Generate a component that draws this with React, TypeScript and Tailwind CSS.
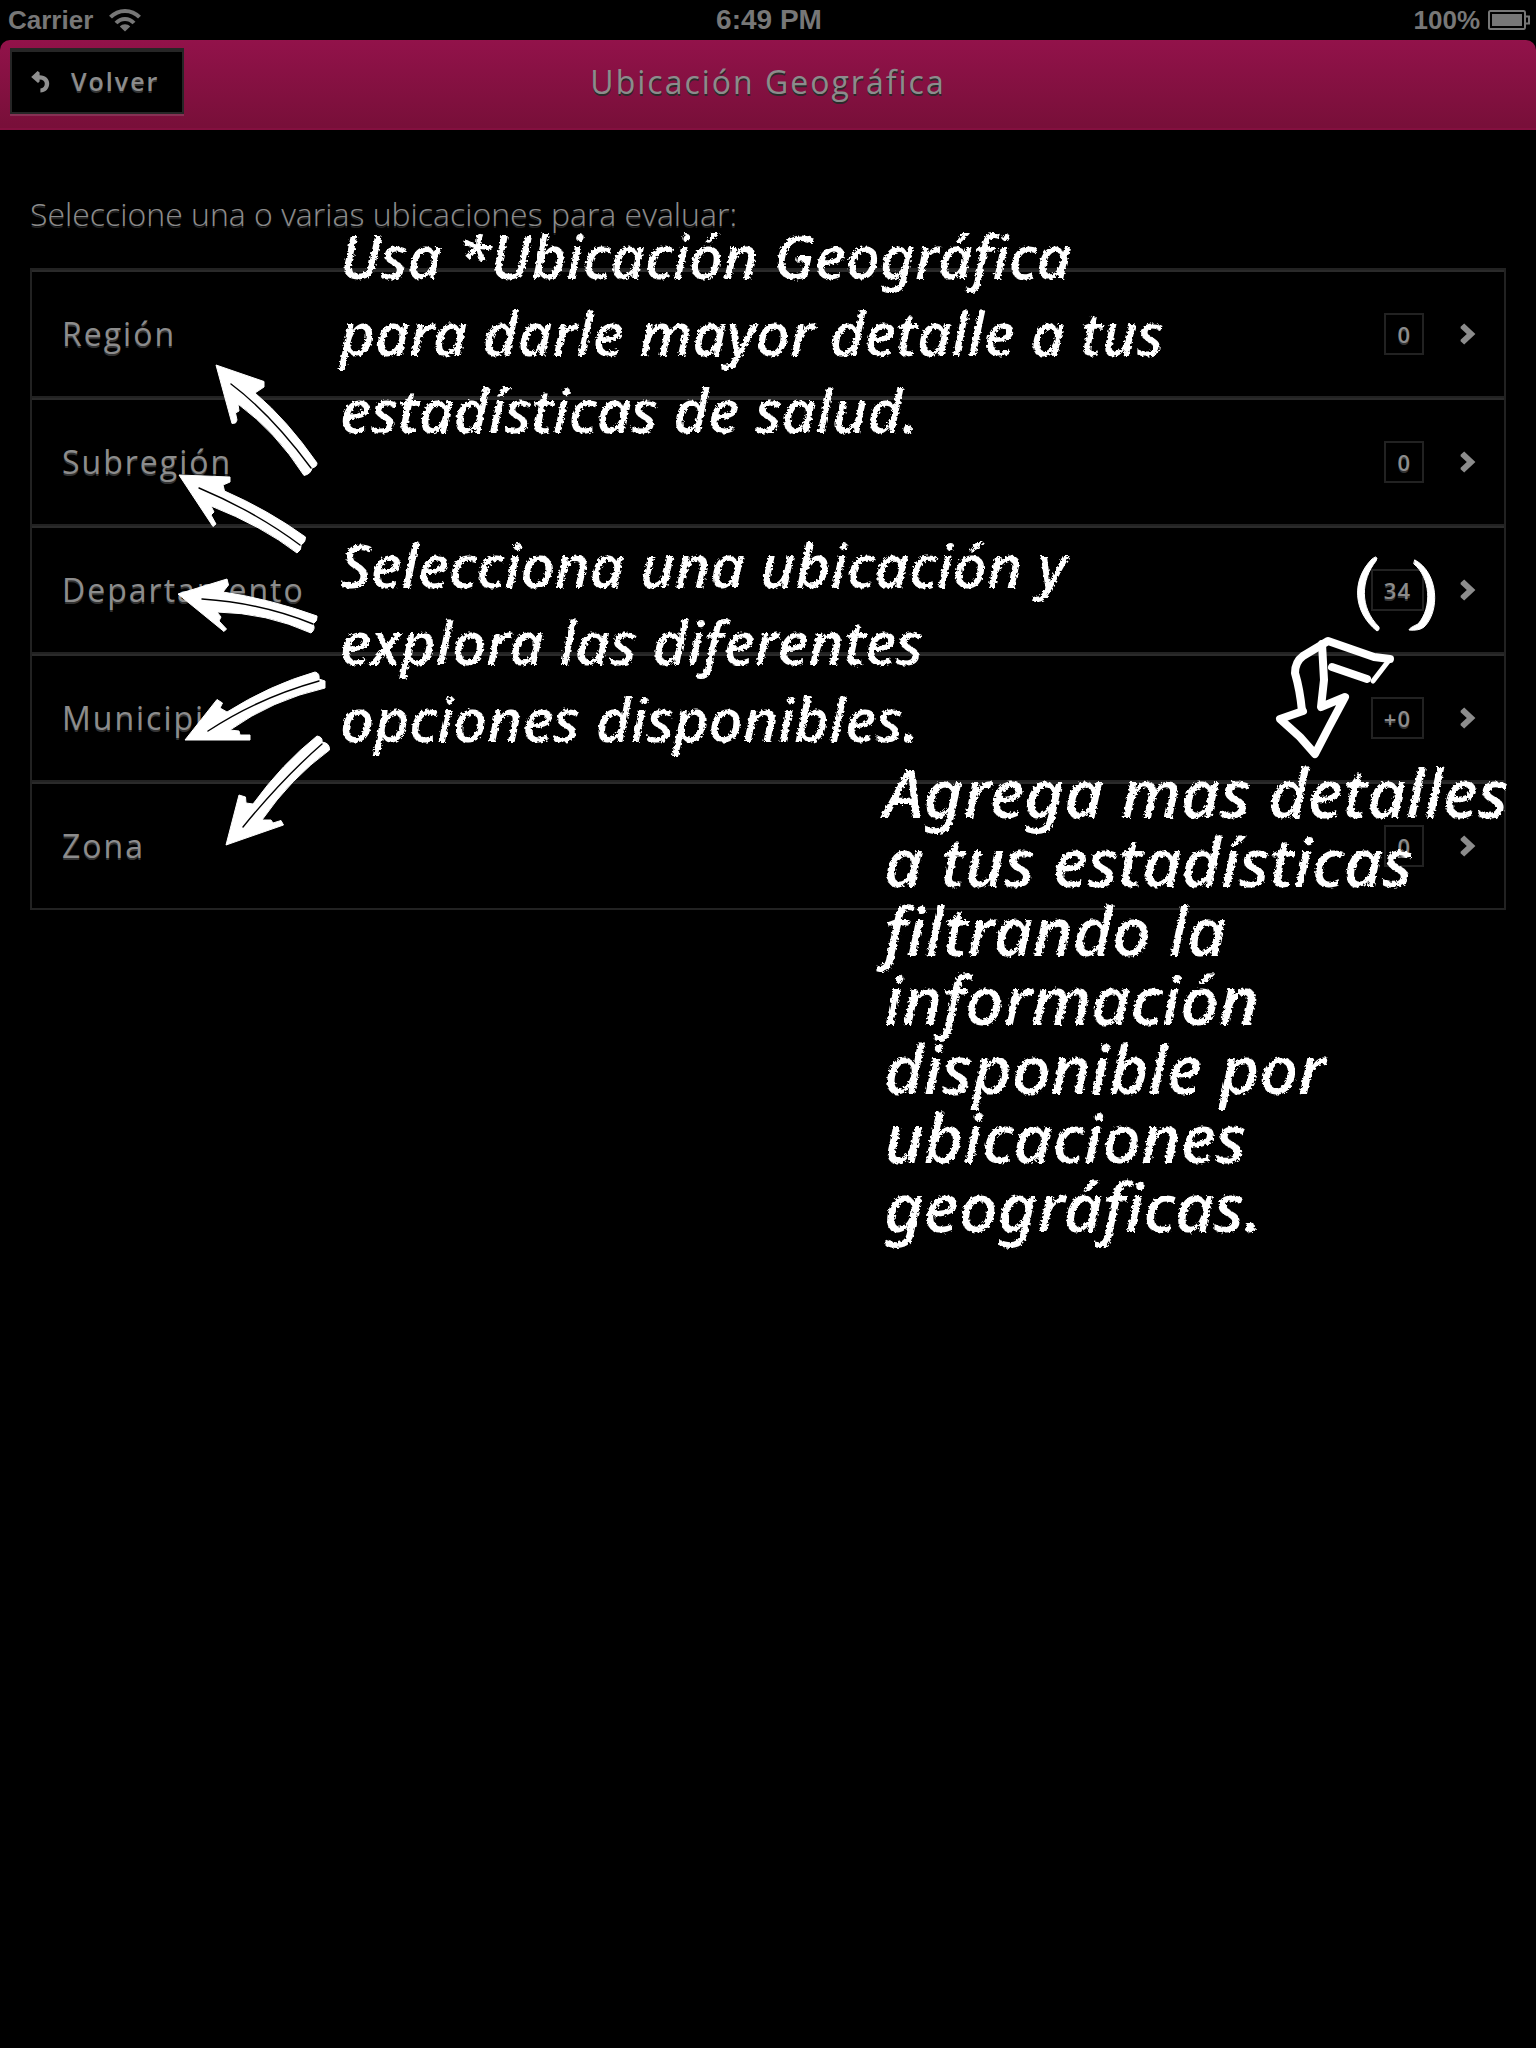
import React from "react";

type Location = { name: string; count: string };

const locations: Location[] = [
  { name: "Región", count: "0" },
  { name: "Subregión", count: "0" },
  { name: "Departamento", count: "34" },
  { name: "Municipio", count: "+0" },
  { name: "Zona", count: "0" },
];

function WifiIcon() {
  return (
    <svg viewBox="0 0 32 24" className="h-6 w-8" fill="none" stroke="#777" strokeWidth="4" aria-hidden="true">
      <path d="M1.5 9.2C9.5 0.8 22.5 0.8 30.5 9.2" />
      <path d="M7 15C12 9.6 20 9.6 25 15" />
      <path d="M10.8 18.6C13.6 15.6 18.4 15.6 21.2 18.6L16 23.6Z" fill="#777" stroke="none" />
    </svg>
  );
}

function BatteryIcon() {
  return (
    <svg viewBox="0 0 42 20" className="h-5 w-[42px]" aria-hidden="true">
      <rect x="1" y="1" width="36" height="18" rx="1.5" fill="none" stroke="#777" strokeWidth="2" />
      <rect x="4" y="4" width="30" height="12" fill="#777" />
      <path d="M38 6.5h3v7h-3" fill="none" stroke="#777" strokeWidth="2" />
    </svg>
  );
}

function BackIcon() {
  return (
    <svg viewBox="0 0 20 22" className="h-[22px] w-5" aria-hidden="true">
      <path d="M0.2 6L6.6 0L8.6 1.4V4.2C14.8 4.2 18.2 8 18.2 12.6C18.2 17.8 14.6 21.4 9.4 21.6V17.6C12.2 17.2 13.8 15.4 13.8 12.8C13.8 10 12 8.4 8.6 8.4V10.6L7 12Z" fill="#8f8f8f" />
    </svg>
  );
}

function Chevron() {
  return (
    <svg viewBox="0 0 16 22" className="h-[22px] w-4" aria-hidden="true">
      <path d="M4.2 0.4L15.4 11L4.2 21.6L0.6 18.2V16.8L6.8 11L0.6 5.2V3.8Z" fill="#8c8c8c" />
    </svg>
  );
}

type Arrow = { body: string; slit: string };

const arrows: Arrow[] = [
  {
    body: "M216 365L264 381.500L264 387L255 393Q287 420 317 463Q317 467 312 468Q311 474 304 475.500Q276 432 238 404L239 411L235.500 413L237 420L235.500 423L232 423.500Z",
    slit: "M231 384Q271 414 311 468",
  },
  {
    body: "M179 475L230 477L230 482L223 485L224.500 491Q268 510 305.500 537Q306 542 301 545Q302 550 297 553Q262 526 211 506L214 512L211 515L216 524L213 526.500Z",
    slit: "M199 488Q256 512 300 545",
  },
  {
    body: "M178 594L227 579L228.500 585L223 592Q270 599 317 616Q318 621 313 624Q316 629 311 633Q267 613 217 612L221 617L219 621L226.500 629L224 631.500Z",
    slit: "M202 599Q262 603 313 624",
  },
  {
    body: "M185 740L217 699.500L222.500 703L220 708L227 712Q270 685 315 672Q320 673 319 679L325 681V688Q272 700 230 730L239 731L240 735L250 735V740Z",
    slit: "M208 731Q258 698 319 681",
  },
  {
    body: "M226 845L239 795L245.500 797L246 803L253 804Q282 764 317 736Q323 737 322 742Q330 743 329.500 750Q291 778 262 820L271 820L273 823L281 820.500L283.500 825Z",
    slit: "M243 827Q283 778 322 744",
  },
];

function PointerArrows() {
  return (
    <svg
      viewBox="170 360 170 490"
      className="absolute top-[360px] left-[170px] h-[490px] w-[170px]"
      aria-hidden="true"
    >
      {arrows.map((arrow) => (
        <g key={arrow.slit}>
          <path d={arrow.body} fill="#fff" stroke="#fff" strokeWidth="1" strokeLinejoin="round" />
          <path d={arrow.slit} fill="none" stroke="#000" strokeWidth="1.4" strokeLinecap="round" />
        </g>
      ))}
    </svg>
  );
}

function CounterMarks() {
  return (
    <svg
      viewBox="1270 550 170 215"
      className="absolute top-[550px] right-[96px] h-[215px] w-[170px]"
      fill="none"
      stroke="#fff"
      strokeLinecap="round"
      strokeLinejoin="round"
      aria-hidden="true"
    >
      <path d="M1376 557Q1378 558 1376 561C1361 580 1359 607 1379 627Q1380 630 1377 631C1353 612 1351 580 1372 559Z" fill="#fff" stroke="#fff" strokeWidth="1" />
      <path d="M1415 560C1439 573 1440 612 1424 627Q1419 631 1409 630Q1409 628 1418 624C1433 607 1430 577 1414 564Z" fill="#fff" stroke="#fff" strokeWidth="1" />
      <path
        d="M1303 711L1280 719L1300 737L1315 754L1329 727L1345 697L1321 707L1324 680L1322 644"
        strokeWidth="8"
      />
      <path d="M1302 711Q1300 690 1295 673Q1295 662 1303 656L1328 641L1374 657L1390 659" strokeWidth="8" />
      <path d="M1390 659L1373 681" strokeWidth="5" />
      <path d="M1332 667L1367 679" strokeWidth="8" />
    </svg>
  );
}

function ChalkFilter() {
  return (
    <svg className="absolute h-0 w-0" aria-hidden="true">
      <filter id="chalk" x="-2%" y="-2%" width="104%" height="104%">
        <feTurbulence type="fractalNoise" baseFrequency="0.35" numOctaves="2" seed="4" result="noise" />
        <feDisplacementMap in="SourceGraphic" in2="noise" scale="5" />
      </filter>
    </svg>
  );
}

export default function App() {
  return (
    <div className="relative min-h-screen overflow-hidden bg-black font-['Open_Sans',sans-serif] text-[#8c8c8c]">
      <div className="grid h-10 grid-cols-3 items-center pr-[6px] pl-2 font-['Liberation_Sans',sans-serif] text-[26px] leading-10 font-bold text-[#777]">
        <div className="flex items-center gap-4">
          <span>Carrier</span>
          <WifiIcon />
        </div>
        <time className="text-center text-[28px]">6:49 PM</time>
        <div className="flex items-center justify-end gap-2">
          <span>100%</span>
          <BatteryIcon />
        </div>
      </div>

      <header className="grid h-[90px] grid-cols-[1fr_auto_1fr] items-start rounded-t-[10px] border-b-2 border-[#83103f] bg-linear-to-b from-[#92124a] to-[#780f39] px-[10px] pt-2">
        <button
          type="button"
          className="flex h-[66px] w-[174px] items-center gap-5 border-2 border-t-4 border-[#262626] bg-black pl-[19px] text-[25px] font-semibold tracking-[2px] text-[#8c8c8c] shadow-[0_2px_0_#863154] [text-shadow:0_2px_0_#333]"
        >
          <BackIcon />
          Volver
        </button>
        <h1 className="pt-1 text-[32px] leading-[60px] font-medium tracking-[2px] [text-shadow:0_2px_0_#2a2a2a]">
          Ubicación Geográfica
        </h1>
      </header>

      <main className="px-[30px] pt-[60px]">
        <p className="mb-[30px] text-[32px] leading-12 font-light [text-shadow:0_2px_0_#222]">
          Seleccione una o varias ubicaciones para evaluar:
        </p>
        <ul className="border-2 border-[#222]">
          {locations.map((location) => (
            <li
              key={location.name}
              className="border-t-2 border-b-2 border-t-[#2a2a2a] border-b-[#222] last:border-b-0"
            >
              <button type="button" className="flex h-[124px] w-full items-center pr-7 pl-[30px] text-left">
                <span className="flex-1 text-[32px] font-medium tracking-[2px] [text-shadow:0_2px_0_#333]">
                  {location.name}
                </span>
                <span className="mr-9 border-2 border-[#222] px-[11px] text-[22px] leading-[38px] font-semibold tracking-[1px] [text-shadow:0_2px_0_#333]">
                  {location.count}
                </span>
                <Chevron />
              </button>
            </li>
          ))}
        </ul>
      </main>

      <ChalkFilter />
      <div className="pointer-events-none absolute inset-0 font-['Noto_Sans',sans-serif] font-medium text-white italic">
        <PointerArrows />
        <CounterMarks />
        <p className="absolute top-[218px] left-[340px] text-[60px] leading-[77px] whitespace-nowrap [filter:url(#chalk)]">
          Usa *Ubicación Geográfica
          <br />
          para darle mayor detalle a tus
          <br />
          estadísticas de salud.
        </p>
        <p className="absolute top-[527px] left-[340px] text-[60px] leading-[77px] whitespace-nowrap [filter:url(#chalk)]">
          Selecciona una ubicación y
          <br />
          explora las diferentes
          <br />
          opciones disponibles.
        </p>
        <p className="absolute top-[757px] left-[884px] text-[68px] leading-[69px] whitespace-nowrap [filter:url(#chalk)]">
          Agrega mas detalles
          <br />
          a tus estadísticas
          <br />
          filtrando la
          <br />
          información
          <br />
          disponible por
          <br />
          ubicaciones
          <br />
          geográficas.
        </p>
      </div>
    </div>
  );
}
